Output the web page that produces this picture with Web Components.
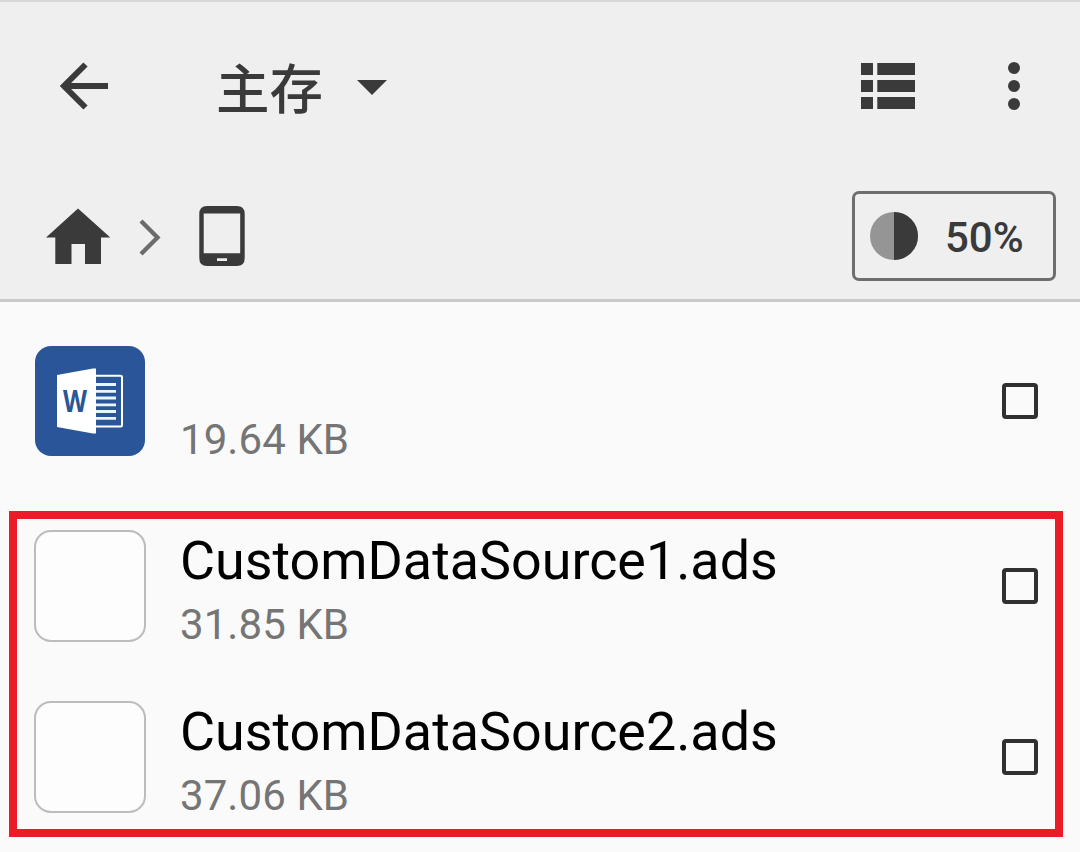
<!DOCTYPE html>
<html lang="zh">
<head>
<meta charset="utf-8">
<title>主存</title>
<style>
html,body{margin:0;height:100%;overflow:hidden;background:#fafafa}
body{font-family:Roboto,"Noto Sans CJK SC",sans-serif;color:#3a3a3a}
</style>
</head>
<body>
<file-browser></file-browser>
<script>
const define = (name, html) => customElements.define(name, class extends HTMLElement {
  constructor() {
    super();
    const t = document.createElement('template');
    t.innerHTML = html;
    this.attachShadow({mode: 'open'}).append(t.content.cloneNode(true));
  }
});

define('app-toolbar', `
<style>
:host{display:flex;align-items:center;box-sizing:border-box;height:168px;padding:0 60px 0 60px}
svg{display:block;flex:none}
.title{font:500 53.500px/80px "Noto Sans CJK SC",sans-serif;margin:-1px 0 0 108px;width:107px;white-space:nowrap}
.caret{margin:3px auto 0 34px}
.list{margin-right:89px}
</style>
<svg width="48" height="50" viewBox="0 0 48 50"><path d="M25.500 3.500 4 25l21.500 21.500M4 25H48" fill="none" stroke="#3a3a3a" stroke-width="6"/></svg>
<span class="title"><slot></slot></span>
<svg class="caret" width="30" height="15"><path d="M0 0H30L15 15Z" fill="#3a3a3a"/></svg>
<svg class="list" width="54" height="46" fill="#3a3a3a"><path d="M0 0h12v12H0zM16.300 0H54v12H16.300zM0 17h12v12H0zM16.300 17H54v12H16.300zM0 34h12v12H0zM16.300 34H54v12H16.300z"/></svg>
<svg width="16" height="48" fill="#3a3a3a"><circle cx="10" cy="6" r="6"/><circle cx="10" cy="24" r="6"/><circle cx="10" cy="42" r="6"/></svg>
`);

define('usage-badge', `
<style>
:host{display:flex;align-items:center;box-sizing:border-box;width:204px;height:90px;border:3px solid #6e6e6e;border-radius:7px;padding-left:15px;font-size:42px;font-weight:500;line-height:60px}
svg{margin-right:27px}
span{margin-top:4px}
</style>
<svg width="48" height="48"><circle cx="24" cy="24" r="24" fill="#959595"/><path d="M24 0a24 24 0 0 1 0 48Z" fill="#3a3a3a"/></svg>
<span><slot></slot></span>
`);

define('path-bar', `
<style>
:host{display:flex;align-items:flex-start;box-sizing:border-box;height:129px;padding:21px 24px 0 46px}
svg{flex:none}
.home{margin-top:17px}.chev{margin:28px 0 0 28px}.phone{margin:15px 0 0 38px}
slot{display:block;margin-left:auto}
</style>
<svg class="home" width="65" height="56"><path d="M32 .5 64.300 29.500H55V56H39V36H25.500V56H9.300V29.500H0Z" fill="#3a3a3a"/></svg>
<svg class="chev" width="22" height="38"><path d="M2 2 18.500 18.500 2 35" fill="none" stroke="#6c6c6c" stroke-width="4.300"/></svg>
<svg class="phone" width="46" height="60"><path fill-rule="evenodd" d="M8 0H38Q45.700 0 45.700 8V52Q45.700 60 38 60H8Q.3 60 .3 52V8Q.3 0 8 0ZM4.700 7.500V47.300H41.200V7.500ZM18 52.300V55H28V52.300Z" fill="#3a3a3a"/></svg>
<slot></slot>
`);

define('word-icon', `
<style>:host{display:block;width:110px;height:110px;margin:1px}svg{display:block}</style>
<svg width="110" height="110">
<rect width="110" height="110" rx="16" fill="#2a5699"/>
<path d="M60 29.800H85.500Q87 29.800 87 31.300V79Q87 80.500 85.500 80.500H60" fill="none" stroke="#fff" stroke-width="2"/>
<path d="M61 38.500H81M61 45.300H81M61 52H81M61 58.800H81M61 65.500H81M61 72.300H81" stroke="#e9f5ff" stroke-width="2.800"/>
<path d="M22 29 58 22.500H61V87.500H58L22 81Z" fill="#fff"/>
<text x="28" y="65.500" font-family="Open Sans,sans-serif" font-weight="700" font-size="29.500" textLength="24" lengthAdjust="spacingAndGlyphs" fill="#2a5699">W</text>
</svg>
`);

define('blank-icon', `<style>:host{display:block;box-sizing:border-box;width:112px;height:112px;border:2px solid #bcbcbc;border-radius:17px;background:#fdfdfd}</style>`);

define('check-box', `<style>:host{display:block;box-sizing:border-box;width:36px;height:36px;border:4px solid #303030;border-radius:4px}</style>`);

define('file-row', `
<style>
:host{display:grid;grid-template-columns:112px 1fr 36px;column-gap:34px;align-items:center;height:134px}
.text{height:110px;white-space:nowrap}
.name{height:60px;font-size:53.850px;line-height:60px;color:#000}
.size{font-size:42px;line-height:68px;color:#757575;letter-spacing:.08px}
</style>
<slot name="icon"></slot>
<div class="text"><div class="name"><slot name="name"></slot></div><div class="size"><slot name="size"></slot></div></div>
<check-box></check-box>
`);

define('file-group', `<style>:host{display:flex;flex-direction:column;gap:37px;box-sizing:border-box;height:326px;margin:43px 17px 0 9px;border:8px solid #e91d27;padding:0 17px}</style><slot></slot>`);

define('file-browser', `
<style>
:host{display:flex;flex-direction:column;height:852px;background:#fafafa}
header{box-sizing:border-box;height:302px;background:#efefef;border-top:2px solid #d7d7d7;border-bottom:3px solid #cacaca}
.single{margin:32px 42px 0 34px}
</style>
<header>
<app-toolbar>主存</app-toolbar>
<path-bar><usage-badge>50%</usage-badge></path-bar>
</header>
<file-row class="single"><word-icon slot="icon"></word-icon><span slot="size">19.64 KB</span></file-row>
<file-group>
<file-row><blank-icon slot="icon"></blank-icon><span slot="name">CustomDataSource1.ads</span><span slot="size">31.85 KB</span></file-row>
<file-row><blank-icon slot="icon"></blank-icon><span slot="name">CustomDataSource2.ads</span><span slot="size">37.06 KB</span></file-row>
</file-group>
`);
</script>
</body>
</html>
